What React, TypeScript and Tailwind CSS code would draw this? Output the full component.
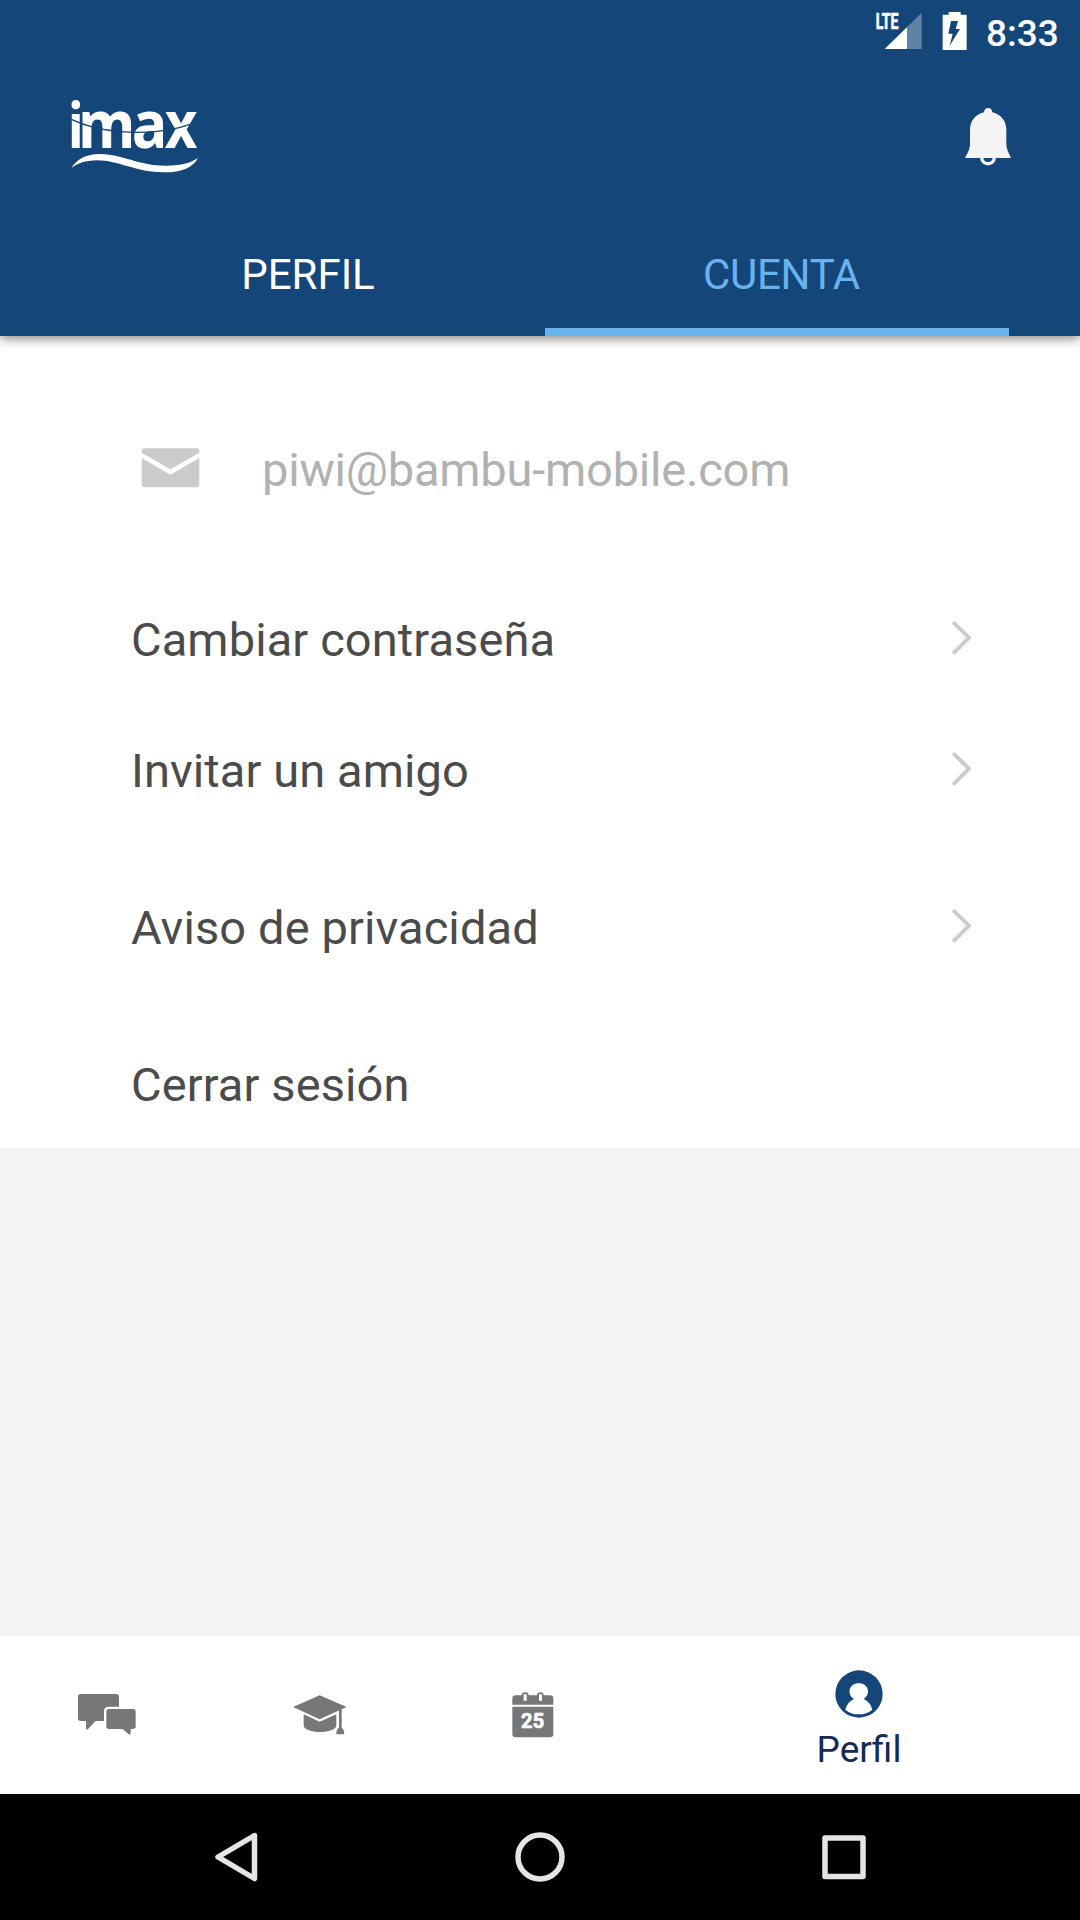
import React from "react";

const options = [
  { label: "Cambiar contraseña", spacing: "mt-[114px]", arrow: true },
  { label: "Invitar un amigo", spacing: "mt-[75px]", arrow: true },
  { label: "Aviso de privacidad", spacing: "mt-[101px]", arrow: true },
  { label: "Cerrar sesión", spacing: "mt-[101px]", arrow: false },
];

function Logo() {
  return (
    <svg
      className="h-[110px] w-[180px] overflow-visible"
      viewBox="0 0 540 330"
      fill="#fff"
    >
      <g fontFamily="'Open Sans'" fontWeight="700" fontSize="197">
        <text transform="translate(53 203) scale(0.8 0.95)">i</text>
        <text transform="translate(84 203) scale(0.89 1)">m</text>
        <text transform="translate(245 203) scale(0.9 1)">a</text>
        <text transform="translate(344 203) scale(0.86 1)">x</text>
      </g>
      <path
        d="M64 118C110 140 150 150 212 155C290 162 380 152 443 124"
        fill="none"
        stroke="#15467a"
        strokeWidth="4"
      />
      <path d="M64 264C82 236 112 221 152 222C220 224 270 258 350 257C395 256 425 248 444 233C430 262 395 277 345 277C260 278 205 241 142 241C105 241 80 252 64 264Z" />
    </svg>
  );
}

function StatusBar() {
  return (
    <div className="flex h-[72px] items-start pl-[875px]">
      <svg
        className="mt-[12px] h-[38px] w-[48px] overflow-visible"
        viewBox="0 0 144 114"
      >
        <path d="M140 2V111H29Z" fill="#5f82a7" />
        <path d="M96 46V111H29Z" fill="#fff" />
        <text
          transform="translate(2 51) scale(0.65 1)"
          fill="#fff"
          stroke="#fff"
          strokeWidth="2"
          fontFamily="Roboto"
          fontWeight="700"
          fontSize="65"
        >
          LTE
        </text>
      </svg>
      <svg
        className="ml-[19px] mt-[12px] h-[38px] w-[25px]"
        viewBox="0 0 75 114"
        fill="#fff"
      >
        <path d="M20 0H56V8H74V114H2V8H20Z" />
        <path d="M27 27H48L41 51H54L23 101L32 65H19Z" fill="#15467a" />
      </svg>
      <span className="ml-[19px] mt-[12px] text-[37px] font-medium leading-[44px] text-white">
        8:33
      </span>
    </div>
  );
}

function BellIcon() {
  return (
    <svg
      className="h-[58px] w-[46px]"
      viewBox="345 323 138 174"
      fill="#f4f4f4"
    >
      <path d="M402 336C402 319 427 319 427 336C454 343 469 362 469 390V432C470 450 478 461 483 473H345C351 461 359 450 360 432V390C360 362 375 343 402 336Z" />
      <path
        d="M395 473C397 496 431 496 433 473"
        fill="none"
        stroke="#f4f4f4"
        strokeWidth="10"
      />
    </svg>
  );
}

function MailIcon() {
  return (
    <svg className="h-[40px] w-[60px]" viewBox="93 83 180 120" fill="#cbcbcb">
      <path d="M95 97V94Q95 84 105 84H258Q268 84 268 94V97L181 147Z" />
      <path d="M95 113L181 163L268 113V191Q268 201 258 201H105Q95 201 95 191Z" />
    </svg>
  );
}

function Chevron() {
  return (
    <svg
      className="h-[36px] w-[20px]"
      viewBox="0 0 60 108"
      fill="none"
      stroke="#cbcbcb"
      strokeWidth="12"
      strokeLinecap="round"
      strokeLinejoin="round"
    >
      <path d="M7 10L51 53L7 97" />
    </svg>
  );
}

function ChatIcon() {
  return (
    <svg className="h-[41px] w-[58px]" viewBox="53 72 174 123" fill="#777">
      <path d="M61 72H168Q176 72 176 80V110H145Q131 110 131 124V153H106L84 176Q77 182 77 174V153H61Q53 153 53 145V80Q53 72 61 72Z" />
      <path d="M146 117H218Q226 117 226 125V169Q226 177 218 177H211V188Q211 197 204 192L187 177H146Q138 177 138 169V125Q138 117 146 117Z" />
    </svg>
  );
}

function GraduationIcon() {
  return (
    <svg className="h-[40px] w-[54px]" viewBox="698 74 162 120" fill="#777">
      <path d="M778 75L859 110L778 147L698 110Z" />
      <path d="M730 132L778 154L828 132V165C828 192 730 192 730 165Z" />
      <path d="M836 117H844V172Q851 176 852 192H828Q828 176 836 172Z" />
    </svg>
  );
}

function CalendarIcon() {
  return (
    <svg className="h-[46px] w-[42px]" viewBox="65 65 126 138" fill="#777">
      <path d="M76 75H94Q94 66 105 66Q115 66 115 75H140Q140 66 151 66Q160 66 160 75H179Q189 75 189 85V103H66V85Q66 75 76 75Z" />
      <path d="M66 109H189V191Q189 201 179 201H76Q66 201 66 191Z" />
      <path d="M100 72H109V91H100ZM146 72H155V91H146Z" fill="#fff" />
      <text
        x="92"
        y="173"
        fill="#fff"
        stroke="#fff"
        strokeWidth="2"
        fontFamily="Roboto"
        fontWeight="700"
        fontSize="60"
        textLength="70"
      >
        25
      </text>
    </svg>
  );
}

function UserIcon() {
  return (
    <svg className="h-[48px] w-[48px]" viewBox="167 149 144 144">
      <circle cx="239" cy="221" r="71" fill="#15467a" />
      <path
        d="M224 236C201 222 209 189 238 189C268 189 276 222 253 236C266 242 275 252 279 268Q262 282 238 282Q214 282 198 268C202 252 211 242 224 236Z"
        fill="#fff"
      />
    </svg>
  );
}

export default function App() {
  return (
    <div className="flex h-[1920px] w-[1080px] flex-col overflow-hidden bg-[#f4f4f4] font-['Roboto',sans-serif]">
      <header className="z-10 flex h-[336px] shrink-0 flex-col bg-[#15467a] shadow-[0_3px_10px_rgba(0,0,0,0.45)]">
        <StatusBar />
        <div className="flex h-[128px] items-start justify-between pl-[50px] pr-[69px]">
          <div className="pt-[8px]">
            <Logo />
          </div>
          <div className="pt-[36px]">
            <BellIcon />
          </div>
        </div>
        <nav className="flex h-[136px] px-[71px] text-[42px] leading-[50px]">
          <button className="flex w-[474px] justify-center pt-[50px] text-white">
            PERFIL
          </button>
          <button className="flex w-[464px] justify-center border-b-8 border-[#67b3ee] pl-[9px] pt-[50px] tracking-[-0.3px] text-[#67b3ee]">
            CUENTA
          </button>
        </nav>
      </header>

      <main className="h-[812px] shrink-0 bg-white pl-[131px] pr-[108px] pt-[106px] text-[47px] leading-[56px]">
        <div className="flex h-[56px] items-center gap-[61px] pl-[10px]">
          <div className="-mt-[5px]">
            <MailIcon />
          </div>
          <span className="tracking-[-0.2px] text-[#b1b1b1]">
            piwi@bambu-mobile.com
          </span>
        </div>
        {options.map((option) => (
          <div
            key={option.label}
            className={`flex h-[56px] items-center justify-between tracking-[0.1px] text-[#4b4b4b] ${option.spacing}`}
          >
            <span>{option.label}</span>
            {option.arrow && (
              <div className="-mt-[5px]">
                <Chevron />
              </div>
            )}
          </div>
        ))}
      </main>

      <nav className="mt-auto flex h-[158px] shrink-0 bg-white">
        <div className="flex w-[213px] items-center justify-center pb-px">
          <ChatIcon />
        </div>
        <div className="flex w-[213px] items-center justify-center pb-px">
          <GraduationIcon />
        </div>
        <div className="flex w-[213px] items-center justify-center pb-px">
          <CalendarIcon />
        </div>
        <div className="flex flex-1 flex-col items-center pr-px pt-[34px]">
          <UserIcon />
          <span className="mt-[10px] text-[37px] leading-[44px] text-[#152a57]">
            Perfil
          </span>
        </div>
      </nav>

      <div className="h-[126px] shrink-0 bg-black">
        <svg
          className="h-[126px] w-[1080px]"
          viewBox="0 0 1080 126"
          fill="none"
          stroke="#e5e5e5"
          strokeWidth="5.5"
          strokeLinejoin="round"
        >
          <path d="M254.500 41.500L218 63L254.500 84.500Z" />
          <circle cx="540" cy="63" r="22" />
          <rect x="825" y="44" width="38" height="38.500" />
        </svg>
      </div>
    </div>
  );
}
